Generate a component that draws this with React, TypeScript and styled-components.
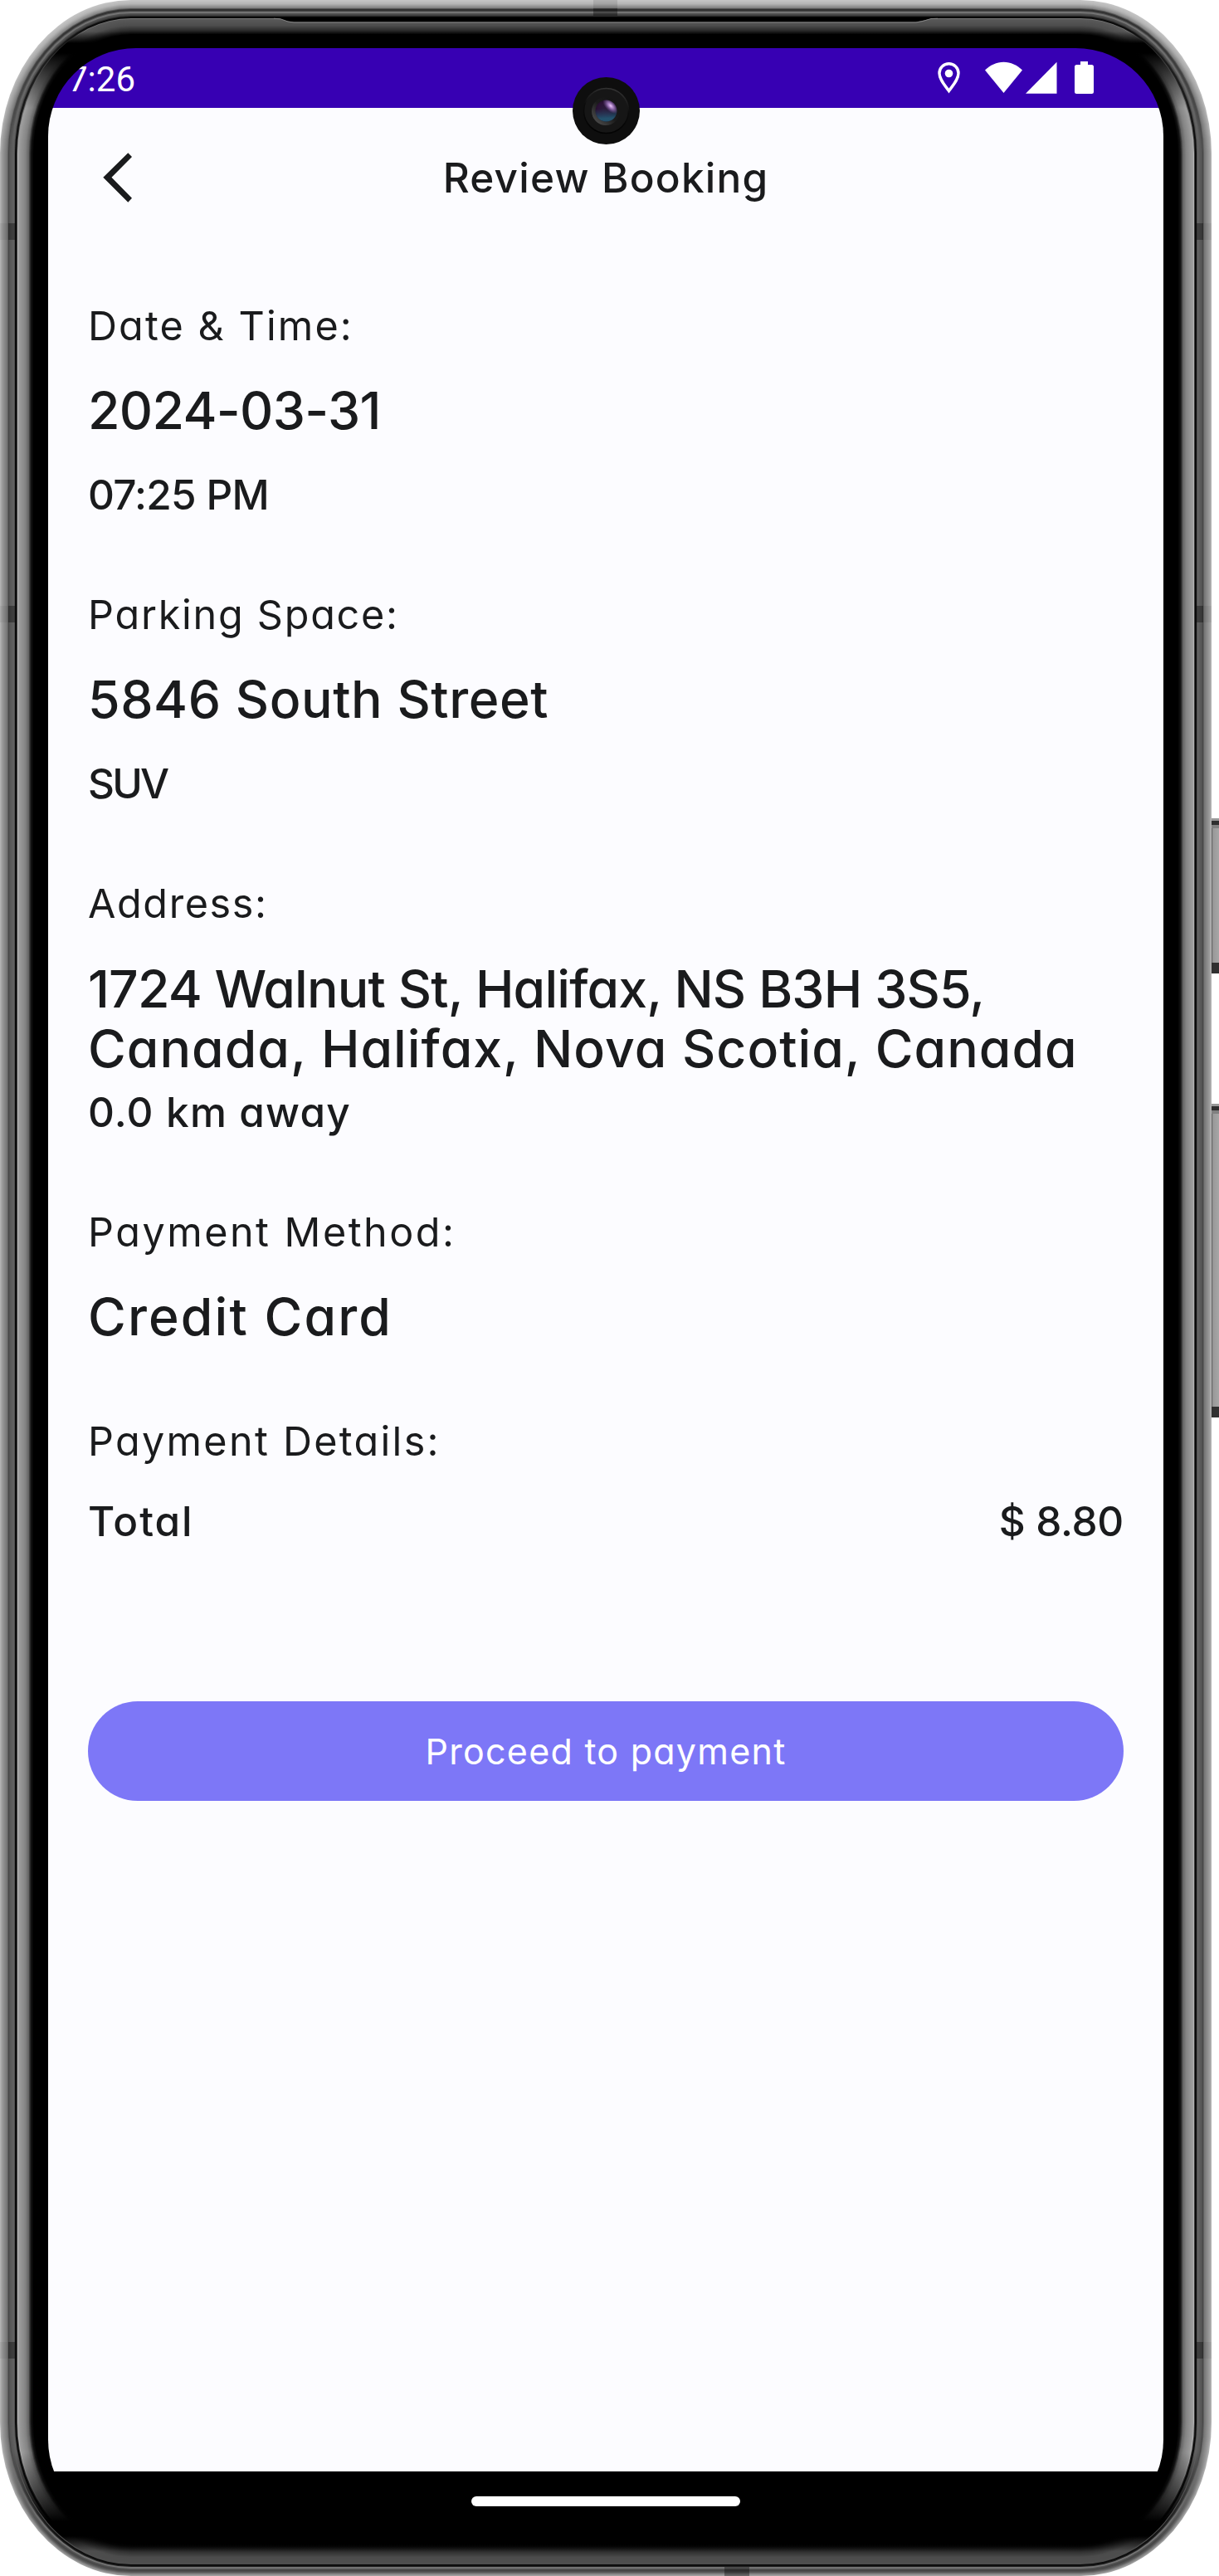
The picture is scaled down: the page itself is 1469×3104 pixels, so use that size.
import React from 'react';
import styled, { createGlobalStyle } from 'styled-components';

const GlobalStyle = createGlobalStyle`
  body { margin: 0; background: #fff; overflow: hidden; }
  *, *::before, *::after { box-sizing: border-box; }
`;

const ink = '#1a1b1d';

/* ---------- device ---------- */

const Device = styled.main`
  position: relative;
  width: 1469px;
  height: 3104px;
  padding: 58px 67px 58px 58px;
  overflow: hidden;
  background: #fff;
`;

const FrameArt = styled.svg`
  position: absolute;
  inset: 0;
  width: 1469px;
  height: 3104px;
  display: block;
`;

const Screen = styled.div`
  position: relative;
  display: flex;
  flex-direction: column;
  width: 1344px;
  height: 2988px;
  border-radius: 106px;
  overflow: hidden;
  background: #000;
  color: ${ink};
  font-family: Inter, 'Open Sans', sans-serif;
  font-feature-settings: 'cv11';
`;

const Camera = styled.div`
  position: absolute;
  top: 35px;
  left: 50%;
  width: 81px;
  height: 81px;
  margin-left: -40.5px;
  border-radius: 50%;
`;

/* ---------- status bar ---------- */

const StatusBar = styled.div`
  flex: none;
  display: flex;
  align-items: flex-start;
  justify-content: space-between;
  height: 72px;
  padding: 13px 84px 0 24px;
  background: #3700b3;
  color: #fff;
`;

const Clock = styled.span`
  font: 400 42px/50px Roboto, sans-serif;
  font-feature-settings: normal;
`;

const StatusIcons = styled.div`
  display: flex;
  padding-top: 3px;
`;

const StatusIcon = styled.svg<{ $gap?: number }>`
  display: block;
  height: 39px;
  margin-left: ${p => p.$gap ?? 0}px;
  fill: #fff;
`;

/* ---------- app ---------- */

const Page = styled.section`
  flex: none;
  display: flex;
  flex-direction: column;
  height: 2848px;
  background: #fcfcff;
`;

const Header = styled.header`
  flex: none;
  display: grid;
  grid-template-columns: 1fr auto 1fr;
  align-items: center;
  height: 167px;
  padding: 0 48px;
`;

const BackButton = styled.button`
  width: 72px;
  height: 72px;
  padding: 0 0 0 18px;
  border: 0;
  background: none;
  display: flex;
  align-items: center;
`;

const Title = styled.h1<{ $track: number }>`
  margin: 0;
  font-size: 49.5px;
  line-height: 72px;
  font-weight: 530;
  letter-spacing: ${p => p.$track}px;
`;

const Content = styled.div`
  display: flex;
  flex-direction: column;
  padding: 60px 48px 0;
`;

const Section = styled.section<{ $after: number }>`
  display: flex;
  flex-direction: column;
  margin-bottom: ${p => p.$after}px;
`;

const Label = styled.h2<{ $track: number }>`
  margin: 0;
  font-size: 48.5px;
  line-height: 72px;
  font-weight: 400;
  letter-spacing: ${p => p.$track}px;
`;

const Value = styled.p<{ $track: number; $top?: number }>`
  margin: ${p => p.$top ?? 0}px 0 0;
  font-size: 62.5px;
  line-height: 72px;
  font-weight: 540;
  white-space: nowrap;
  letter-spacing: ${p => p.$track}px;
`;

const Detail = styled.p<{ $track: number; $top?: number }>`
  margin: ${p => p.$top ?? 0}px 0 0;
  font-size: 49.5px;
  line-height: 72px;
  font-weight: 530;
  letter-spacing: ${p => p.$track}px;
`;

const TotalRow = styled.div`
  display: flex;
  justify-content: space-between;
  margin-top: 24px;
`;

const PayButton = styled.button`
  height: 120px;
  padding: 0;
  border: 0;
  border-radius: 60px;
  background: #7d77f7;
  color: #fff;
  font: 400 43px/64px Inter, sans-serif;
  font-feature-settings: 'cv11';
  letter-spacing: 1.25px;
`;

const NavBar = styled.div`
  flex: 1;
  display: flex;
  justify-content: center;
  align-items: flex-start;
  padding-top: 30px;
`;

const NavHandle = styled.div`
  width: 324px;
  height: 12px;
  border-radius: 6px;
  background: #fff;
`;

/* ---------- bezel drawing ---------- */

type Stop = [number, number];

const sideShade: Stop[] = [[0, 178], [2, 156], [8, 118], [9, 96], [10, 70], [11, 84], [16, 98], [17, 80], [18, 12], [19, 8], [20, 60], [21, 180], [22, 158], [30, 132], [34, 100], [35, 66], [37, 20], [40, 0]];
const topShade: Stop[] = [[0, 196], [4, 182], [9, 130], [10, 84], [11, 50], [12, 50], [13, 74], [14, 112], [15, 118], [16, 82], [18, 64], [19, 40], [20, 10], [21, 10], [22, 116], [23, 88], [30, 78], [36, 44], [40, 12], [41, 0]];
const bottomShade: Stop[] = [[0, 160], [2, 130], [4, 90], [6, 68], [8, 84], [9, 120], [10, 110], [11, 30], [12, 16], [13, 10], [14, 78], [22, 76], [28, 50], [35, 8], [38, 0]];

const shadeAt = (stops: Stop[], o: number): string => {
  let v = 0;
  for (let i = 0; i < stops.length - 1; i++) {
    const [a, av] = stops[i];
    const [b, bv] = stops[i + 1];
    if (o >= a && o <= b) { v = av + ((bv - av) * (o - a)) / (b - a); break; }
  }
  const n = Math.round(v);
  return `rgb(${n},${n},${n})`;
};

const rings = Array.from({ length: 42 }, (_, i) => i);

const Frame = () => (
  <FrameArt viewBox="0 0 1469 3104" aria-hidden="true">
    <defs>
      {rings.map(o => (
        <linearGradient key={o} id={`ring${o}`} gradientUnits="userSpaceOnUse" x1="0" y1="0" x2="0" y2="3104">
          <stop offset={(o > 21 ? 38 : 30) / 3104} stopColor={shadeAt(topShade, o)} />
          {o > 21 && <stop offset={52 / 3104} stopColor="#000" />}
          {o > 21 && <stop offset={64 / 3104} stopColor="#000" />}
          <stop offset={(o > 21 ? 130 : 180) / 3104} stopColor={shadeAt(sideShade, o)} />
          <stop offset={2955 / 3104} stopColor={shadeAt(sideShade, o)} />
          {o > 14 && <stop offset={3038 / 3104} stopColor="#000" />}
          {o > 14 && <stop offset={3056 / 3104} stopColor="#000" />}
          <stop offset={(o > 14 ? 3074 : 3060) / 3104} stopColor={shadeAt(bottomShade, o)} />
        </linearGradient>
      ))}
      <linearGradient id="key" x1="0" x2="1" y1="0" y2="0">
        <stop offset="0" stopColor="#555" /><stop offset=".2" stopColor="#999" /><stop offset="1" stopColor="#a6a6a6" />
      </linearGradient>
    </defs>
    {[[986, 187], [1330, 378]].map(([y, h]) => (
      <g key={y}>
        <rect x="1460" y={y} width="9" height={h} fill="url(#key)" />
        <rect x="1460" y={y} width="9" height="3" fill="#999" />
        <rect x="1460" y={y + 3} width="9" height="5" fill="#2e2e2e" />
        <rect x="1460" y={y + 8} width="9" height="4" fill="#808080" />
        <rect x="1460" y={y + h - 13} width="9" height="13" fill="#303030" />
      </g>
    ))}
    {rings.map(o => (
      <rect key={o} x={o} y={o} width={1460 - 2 * o} height={3104 - 2 * o} rx={158 - o} ry={185 - o} fill={`url(#ring${o})`} />
    ))}
    {[269, 730, 2822].map(y => (
      <g key={y} fill="#000">
        <rect x="0" y={y} width="10" height="20" opacity=".05" />
        <rect x="10" y={y} width="8" height="20" opacity=".35" />
        <rect x="1442" y={y} width="8" height="20" opacity=".35" />
        <rect x="1450" y={y} width="10" height="20" opacity=".05" />
      </g>
    ))}
    <rect x="715" y="0" width="29" height="10" opacity=".1" />
    <rect x="715" y="10" width="29" height="9" opacity=".35" />
    <rect x="873" y="3093" width="30" height="11" opacity=".35" />
    <path d="M330 21H1130L1118 23.5 1104 26.5H354L346 25.5 337 22.5Z" fill="#000" />
    <path d="M330 22.3L338 22.8 347 26 354 27H1104L1112 25.5 1122 22.5 1130 22.3" fill="none" stroke="#858585" strokeWidth="1" />
  </FrameArt>
);

const Lens = () => (
  <svg width="81" height="81" viewBox="0 0 81 81">
    <defs>
      <radialGradient id="glass" cx=".4" cy=".45" r=".62">
        <stop offset="0" stopColor="#2a1c3c" /><stop offset=".5" stopColor="#2b1236" /><stop offset="1" stopColor="#120818" />
      </radialGradient>
      <linearGradient id="teal" x1=".45" y1="0" x2=".5" y2="1">
        <stop offset=".4" stopColor="#24506c" stopOpacity="0" /><stop offset=".85" stopColor="#245570" stopOpacity=".95" />
      </linearGradient>
      <radialGradient id="flare" cx=".5" cy=".5" r=".5">
        <stop offset="0" stopColor="#f0c8ff" /><stop offset=".4" stopColor="#a67cc4" stopOpacity=".85" /><stop offset="1" stopColor="#7a5aa0" stopOpacity="0" />
      </radialGradient>
      <linearGradient id="rim" x1="1" y1="0" x2="0" y2="1">
        <stop offset="0" stopColor="#111" /><stop offset=".5" stopColor="#1b1b1b" /><stop offset="1" stopColor="#5a5a5a" />
      </linearGradient>
      <linearGradient id="groove" x1=".6" y1="0" x2=".4" y2="1">
        <stop offset="0" stopColor="#333" /><stop offset=".45" stopColor="#0c0c0c" /><stop offset="1" stopColor="#020202" />
      </linearGradient>
      <clipPath id="lensClip"><circle cx="40.5" cy="40.5" r="13" /></clipPath>
    </defs>
    <circle cx="40.5" cy="40.5" r="40.5" fill="#0e0e0e" />
    <circle cx="40.5" cy="40.5" r="27" fill="#161616" stroke="url(#groove)" strokeWidth="1.6" />
    <circle cx="40" cy="41" r="17" fill="url(#rim)" />
    <circle cx="40.5" cy="40.5" r="13" fill="url(#glass)" />
    <circle cx="40.5" cy="40.5" r="13" fill="url(#teal)" />
    <g clipPath="url(#lensClip)">
      <ellipse cx="46" cy="34.5" rx="12" ry="6.5" transform="rotate(45 46 34.5)" fill="url(#flare)" />
    </g>
  </svg>
);

export default function App() {
  return (
    <>
      <GlobalStyle />
      <Device>
        <Frame />
        <Screen>
          <StatusBar>
            <Clock>7:26</Clock>
            <StatusIcons>
              <StatusIcon width="27" viewBox="0 0 27 39">
                <path d="M13.5 2.8C7.4 2.8 2 7.4 2 14.2 2 21.5 8.5 28.6 13.5 35.6 18.5 28.6 25 21.5 25 14.2 25 7.4 19.6 2.8 13.5 2.8Z" fill="none" stroke="#fff" strokeWidth="3.4" />
                <circle cx="13.5" cy="14.5" r="4.8" />
              </StatusIcon>
              <StatusIcon $gap={30} width="45" viewBox="0 0 45 39">
                <path d="M0 10.6C6 4.500 14 .7 22.500 .7S39 4.500 45 10.600L22.500 38Z" />
              </StatusIcon>
              <StatusIcon $gap={4} width="38" viewBox="0 0 38 39">
                <path d="M37.500 .8V38.700H0Z" />
              </StatusIcon>
              <StatusIcon $gap={21} width="23" viewBox="0 0 23 39">
                <path d="M7 0H16V4H20.500Q23 4 23 6.500V36.500Q23 39 20.500 39H2.500Q0 39 0 36.500V6.500Q0 4 2.500 4H7Z" />
              </StatusIcon>
            </StatusIcons>
          </StatusBar>

          <Page>
            <Header>
              <BackButton aria-label="Back">
                <svg width="36" height="60" viewBox="0 0 36 60">
                  <path d="M30.300 .3L35 5 10.500 29.700 35 54.700 30.300 59.700 .3 29.700Z" fill={ink} />
                </svg>
              </BackButton>
              <Title $track={1.2}>Review Booking</Title>
            </Header>

            <Content>
              <Section $after={73}>
                <Label $track={2.1}>Date &amp; Time:</Label>
                <Value $track={-0.65} $top={29}>2024-03-31</Value>
                <Detail $track={-0.75} $top={30}>07:25 PM</Detail>
              </Section>

              <Section $after={73}>
                <Label $track={1.75}>Parking Space:</Label>
                <Value $track={0.55} $top={29}>5846 South Street</Value>
                <Detail $track={-2.8} $top={30}>SUV</Detail>
              </Section>

              <Section $after={73}>
                <Label $track={1.6}>Address:</Label>
                <Value $track={-0.85} $top={30}>1724 Walnut St, Halifax, NS B3H 3S5,</Value>
                <Value $track={1}>Canada, Halifax, Nova Scotia, Canada</Value>
                <Detail $track={1.15} $top={5}>0.0 km away</Detail>
              </Section>

              <Section $after={79}>
                <Label $track={2.5}>Payment Method:</Label>
                <Value $track={2.1} $top={29}>Credit Card</Value>
              </Section>

              <Section $after={181}>
                <Label $track={2.3}>Payment Details:</Label>
                <TotalRow>
                  <Detail $track={1.9}>Total</Detail>
                  <Detail $track={-0.3}>$ 8.80</Detail>
                </TotalRow>
              </Section>

              <PayButton>Proceed to payment</PayButton>
            </Content>
          </Page>

          <NavBar>
            <NavHandle />
          </NavBar>
          <Camera><Lens /></Camera>
        </Screen>
      </Device>
    </>
  );
}
